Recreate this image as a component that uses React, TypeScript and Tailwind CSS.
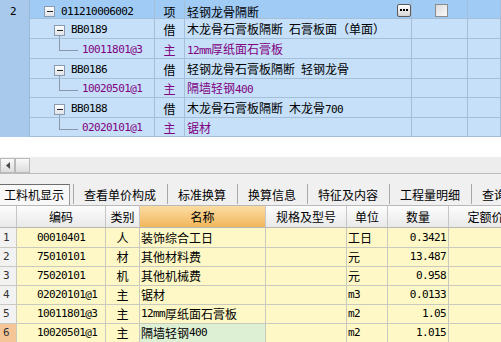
import React from "react";

const MONO = "font-['DejaVu_Sans_Mono',monospace] text-[11px] tracking-[-0.6px]";
const CJK = "font-['Noto_Sans_CJK_SC','Noto_Sans',sans-serif] text-[12px] leading-[14px]";

function Txt({ s }: { s: string }) {
  const parts = s.match(/[\x00-\x7f]+|[^\x00-\x7f]+/g) || [];
  return (
    <>
      {parts.map((p, i) =>
        /^[\x00-\x7f]/.test(p) ? (
          <span key={i} className={MONO}>
            {p}
          </span>
        ) : (
          <span key={i}>{p}</span>
        )
      )}
    </>
  );
}

type TopRow = {
  kind: 0 | 1 | 2;
  code: string;
  type: string;
  name: string;
  purple?: boolean;
  sel?: boolean;
  h: string;
  pt: string;
};

const topRows: TopRow[] = [
  { kind: 0, code: "011210006002", type: "项", name: "轻钢龙骨隔断", sel: true, h: "h-[19px]", pt: "pt-[5px]" },
  { kind: 1, code: "BB0189", type: "借", name: "木龙骨石膏板隔断 石膏板面（单面）", h: "h-[20px]", pt: "pt-[3px]" },
  { kind: 2, code: "10011801@3", type: "主", name: "12mm厚纸面石膏板", purple: true, h: "h-[20px]", pt: "pt-[3px]" },
  { kind: 1, code: "BB0186", type: "借", name: "轻钢龙骨石膏板隔断 轻钢龙骨", h: "h-[20px]", pt: "pt-[3px]" },
  { kind: 2, code: "10020501@1", type: "主", name: "隔墙轻钢400", purple: true, h: "h-[19px]", pt: "pt-[2px]" },
  { kind: 1, code: "BB0188", type: "借", name: "木龙骨石膏板隔断 木龙骨700", h: "h-[20px]", pt: "pt-[3px]" },
  { kind: 2, code: "02020101@1", type: "主", name: "锯材", purple: true, h: "h-[19px]", pt: "pt-[2px]" },
];

function MinusBox() {
  return (
    <span className="flex h-[11px] w-[11px] shrink-0 items-center justify-center border border-[#8a9bb0] bg-gradient-to-b from-white to-[#dfe3e8]">
      <span className="h-[1px] w-[6px] bg-[#222]" />
    </span>
  );
}

function TopSection() {
  const cell = "flex items-center border-r border-[#a6bfd9] shrink-0";
  return (
    <div className={`flex h-[137px] ${CJK}`}>
      <div className="w-[30px] shrink-0 border-r border-[#9ab8d8] bg-[#a8c9eb]">
        <div className="flex h-[19px] items-center pl-[10px] pt-[5px]">
          <span className={MONO}>2</span>
        </div>
      </div>
      <div className="flex flex-col">
        {topRows.map((r, i) => {
          const bg = r.sel ? "bg-[#a0cbf5]" : "bg-[#c6e0fa]";
          const color = r.purple ? "text-[#800080]" : "text-black";
          return (
            <div key={i} className={`flex ${r.h} ${bg} border-b border-[#a6bfd9]`}>
              <div className={`${cell} ${r.pt} relative w-[125px]`}>
                {r.kind === 0 && (
                  <div className="flex items-center gap-[6px] pl-[14px]">
                    <MinusBox />
                    <span className={`${MONO} text-black`}>{r.code}</span>
                  </div>
                )}
                {r.kind === 1 && (
                  <>
                    <span className="absolute bottom-0 left-[29px] top-[16px] w-[1px] bg-[#8898aa]" />
                    <div className="flex items-center gap-[6px] pl-[24px]">
                      <MinusBox />
                      <span className={`${MONO} text-black`}>{r.code}</span>
                    </div>
                  </>
                )}
                {r.kind === 2 && (
                  <>
                    <span className="absolute left-[29px] top-0 h-[12px] w-[1px] bg-[#8898aa]" />
                    <span className="absolute left-[29px] top-[11px] h-[1px] w-[19px] bg-[#8898aa]" />
                    <span className={`${MONO} pl-[52px] text-[#800080]`}>{r.code}</span>
                  </>
                )}
              </div>
              <div className={`${cell} ${r.pt} w-[30px] justify-center ${color}`}>{r.type}</div>
              <div className={`${cell} ${r.pt} w-[227px] justify-between pl-[2px] ${color}`}>
                <span className="whitespace-nowrap">
                  <Txt s={r.name} />
                </span>
                {r.sel && (
                  <span className="mb-[3px] flex h-[13px] w-[14px] items-center justify-center gap-[1px] rounded-[2px] border border-[#5a5a5a] bg-gradient-to-b from-white to-[#d6d6d6]">
                    <span className="h-[2px] w-[2px] bg-black" />
                    <span className="h-[2px] w-[2px] bg-black" />
                    <span className="h-[2px] w-[2px] bg-black" />
                  </span>
                )}
              </div>
              <div className={`${cell} ${r.pt} w-[56px] justify-center`}>
                {r.sel && (
                  <span className="mb-[2px] ml-[3px] h-[13px] w-[13px] border border-[#8c8c8c] bg-gradient-to-br from-[#dcdcdc] to-[#fafafa]" />
                )}
              </div>
              <div className={`${cell} w-[33px]`} />
            </div>
          );
        })}
      </div>
    </div>
  );
}

function ScrollBar() {
  return (
    <div className="flex h-[16px] items-center bg-[#ededed]">
      <div className="flex h-[15px] w-[15px] items-center justify-center border border-[#b9b9b9] bg-gradient-to-b from-[#fafafa] to-[#dcdcdc]">
        <svg width="4" height="7" viewBox="0 0 4 7">
          <path d="M4 0 L0 3.5 L4 7 Z" fill="#4a4a4a" />
        </svg>
      </div>
      <div className="h-[15px] w-[15px] border border-[#b9b9b9] bg-gradient-to-b from-[#fafafa] to-[#dcdcdc]" />
    </div>
  );
}

const tabs = ["查看单价构成", "标准换算", "换算信息", "特征及内容", "工程量明细", "查询"];

function TabBar() {
  return (
    <div className={`flex h-[31px] items-end bg-[#f0f0f0] ${CJK} whitespace-nowrap`}>
      <div className="flex h-[21px] w-[70px] shrink-0 items-center border-r border-t border-r-[#9a9a9a] border-t-[#6e6e6e] bg-[#f8f8f8] pl-[4px]">
        工料机显示
      </div>
      <div className="w-[3px] shrink-0" />
      {tabs.map((t, i) => (
        <React.Fragment key={i}>
          <span className="mb-[1px] h-[20px] w-[1px] shrink-0 bg-[#a8a8a8]" />
          <div className="flex h-[21px] shrink-0 items-center pl-[10px] pr-[11px]">{t}</div>
        </React.Fragment>
      ))}
    </div>
  );
}

type BRow = { n: string; code: string; type: string; name: string; unit: string; qty: string; sel?: boolean; h: string };

const bRows: BRow[] = [
  { n: "1", code: "00010401", type: "人", name: "装饰综合工日", unit: "工日", qty: "0.3421", h: "h-[20px]" },
  { n: "2", code: "75010101", type: "材", name: "其他材料费", unit: "元", qty: "13.487", h: "h-[19px]" },
  { n: "3", code: "75020101", type: "机", name: "其他机械费", unit: "元", qty: "0.958", h: "h-[19px]" },
  { n: "4", code: "02020101@1", type: "主", name: "锯材", unit: "m3", qty: "0.0133", h: "h-[19px]" },
  { n: "5", code: "10011801@3", type: "主", name: "12mm厚纸面石膏板", unit: "m2", qty: "1.05", h: "h-[19px]" },
  { n: "6", code: "10020501@1", type: "主", name: "隔墙轻钢400", unit: "m2", qty: "1.015", sel: true, h: "h-[19px]" },
];

function BottomGrid() {
  const hc = "flex h-full shrink-0 items-center justify-center border-r border-[#c6c6c6]";
  const c = "flex h-full shrink-0 items-center border-r border-[#c9c9c0]";
  const y = "bg-[#fdf8c6]";
  return (
    <div className={`${CJK} whitespace-nowrap`}>
      <div className="flex h-[23px] border-b border-t border-[#b8b8b8] bg-gradient-to-b from-[#fdfdfd] to-[#e9e9e9]">
        <div className={`${hc} w-[17px]`} />
        <div className={`${hc} w-[89px]`}>编码</div>
        <div className={`${hc} w-[34px]`}>类别</div>
        <div className={`${hc} w-[126px] bg-gradient-to-b from-[#fcdca2] to-[#f1b75a]`}>名称</div>
        <div className={`${hc} w-[81px]`}>规格及型号</div>
        <div className={`${hc} w-[41px]`}>单位</div>
        <div className={`${hc} w-[61px]`}>数量</div>
        <div className={`${hc} w-[74px]`}>定额价</div>
      </div>
      {bRows.map((r, i) => (
        <div key={i} className={`flex ${r.h} border-b border-[#c9c9c0]`}>
          <div className={`${c} w-[17px] pl-[3px] text-[#333] ${r.sel ? "bg-[#f6c597]" : "bg-[#f2f2f2]"}`}>
            <span className={MONO}>{r.n}</span>
          </div>
          <div className={`${c} w-[89px] pl-[20px] ${y}`}>
            <span className={MONO}>{r.code}</span>
          </div>
          <div className={`${c} w-[34px] justify-center ${y}`}>{r.type}</div>
          <div className={`${c} w-[126px] pl-[1px] ${r.sel ? "bg-[#def0d3]" : y}`}>
            <Txt s={r.name} />
          </div>
          <div className={`${c} w-[81px] ${y}`} />
          <div className={`${c} w-[41px] pl-[1px] ${y}`}>
            <Txt s={r.unit} />
          </div>
          <div className={`${c} w-[61px] justify-end pr-[2px] ${y}`}>
            <span className={MONO}>{r.qty}</span>
          </div>
          <div className={`${c} w-[74px] ${y}`} />
        </div>
      ))}
    </div>
  );
}

export default function App() {
  return (
    <div className="h-[342px] w-[501px] overflow-hidden bg-white text-black">
      <TopSection />
      <div className="h-[20px] bg-white" />
      <ScrollBar />
      <div className="h-[1px] bg-[#bcbcbc]" />
      <TabBar />
      <BottomGrid />
    </div>
  );
}
